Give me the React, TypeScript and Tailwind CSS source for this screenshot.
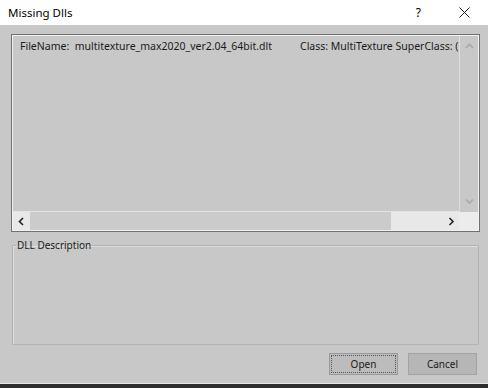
import React from 'react';

const font = { fontFamily: '"Noto Sans", "Open Sans", Arial, sans-serif' };

const Chevron: React.FC<{ dir: 'up' | 'down' | 'left' | 'right'; color: string }> = ({ dir, color }) => {
  const pts = {
    up: '1,6 4.5,2.5 8,6',
    down: '1,2.5 4.5,6 8,2.5',
    left: '6,1 2.5,4.5 6,8',
    right: '2.5,1 6,4.5 2.5,8',
  }[dir];
  return (
    <svg width="9" height="9" viewBox="0 0 9 9">
      <polyline points={pts} fill="none" stroke={color} strokeWidth="1.6" />
    </svg>
  );
};

const App: React.FC = () => {
  return (
    <div className="w-[488px] h-[388px] flex flex-col bg-[#c8c8c8] text-[#1b1b1b] overflow-hidden" style={font}>
      {/* title bar */}
      <div className="h-[25px] bg-white flex items-center shrink-0">
        <span className="ml-[8px] text-[11.5px] text-black">Missing Dlls</span>
        <span className="ml-auto mr-[38px] text-[12px] text-black">?</span>
        <svg width="11" height="11" viewBox="0 0 11 11" className="mr-[18px]">
          <path d="M0.5 0.5 L10.5 10.5 M10.5 0.5 L0.5 10.5" stroke="#222" strokeWidth="1" />
        </svg>
      </div>

      <div className="flex-1 flex flex-col">
        {/* list box */}
        <div className="mt-[9px] ml-[11px] w-[469px] h-[198px] border border-[#707070]">
          <div className="w-full h-full border border-[#f2f2f2] flex flex-col">
            <div className="flex-1 flex min-h-0">
              <div className="flex-1 overflow-hidden border-b border-[#e4e4e4]">
                <div className="flex whitespace-nowrap text-[10.5px] pl-[7px] pt-[3px]">
                  <span className="w-[280px] shrink-0">FileName:&nbsp; multitexture_max2020_ver2.04_64bit.dlt</span>
                  <span>Class: MultiTexture SuperClass: (</span>
                </div>
              </div>
              <div className="w-[19px] border-l border-[#dedede] flex flex-col items-center justify-between py-[6px]">
                <Chevron dir="up" color="#a9a9a9" />
                <Chevron dir="down" color="#a9a9a9" />
              </div>
            </div>
            <div className="h-[18px] flex">
              <div className="flex-1 flex bg-[#e8e8e8]">
                <div className="w-[17px] flex items-center justify-center">
                  <Chevron dir="left" color="#222" />
                </div>
                <div className="w-[361px] bg-[#cbcbcb]" />
                <div className="flex-1 flex items-center justify-end pr-[3px]">
                  <Chevron dir="right" color="#222" />
                </div>
              </div>
              <div className="w-[19px] bg-[#ececec]" />
            </div>
          </div>
        </div>

        {/* DLL description group */}
        <fieldset className="mt-[6px] ml-[12px] w-[467px] h-[107px] border border-[#b2b2b2] shadow-[inset_1px_1px_0_#dddddd] rounded-[1px]">
          <legend className="ml-[3px] px-[1px] text-[10px] leading-[14px]">DLL Description</legend>
        </fieldset>

        {/* buttons */}
        <div className="mt-[8px] flex justify-end gap-[10px] pr-[11px]">
          <button className="w-[69px] h-[22px] bg-[#bcbcbc] border border-[#9a9a9a] text-[10px] flex items-center justify-center">
            <span className="border border-dotted border-[#555] w-[65px] h-[18px] flex items-center justify-center">Open</span>
          </button>
          <button className="w-[69px] h-[22px] bg-[#b6b6b6] border border-[#a2a2a2] text-[10px]">Cancel</button>
        </div>
      </div>

      <div className="h-[1px] bg-[#e6e6e6] shrink-0" />
      <div className="h-[4px] bg-[#2e2e2e] shrink-0" />
    </div>
  );
};

export default App;
